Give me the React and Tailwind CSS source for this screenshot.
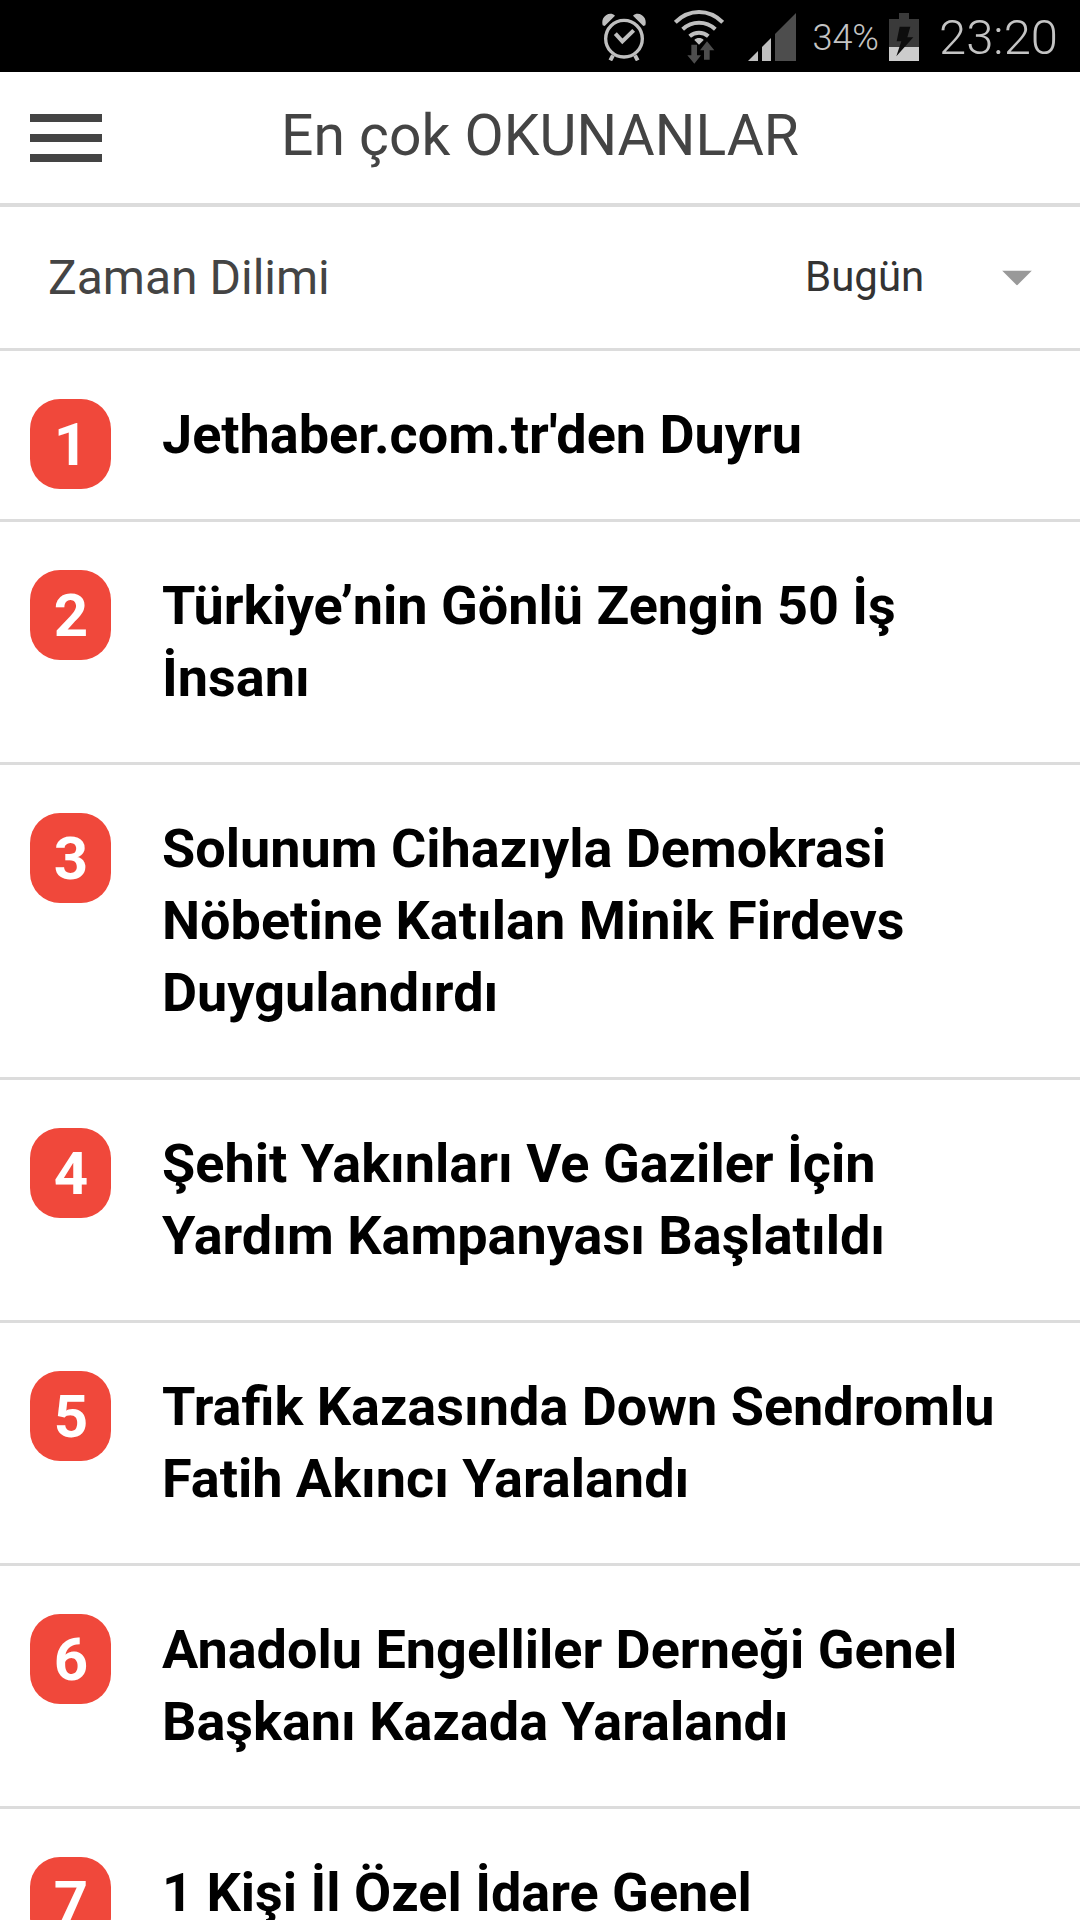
import { useState } from "react";

const news = [
  { id: 1, title: "Jethaber.com.tr'den Duyru" },
  { id: 2, title: "Türkiye’nin Gönlü Zengin 50 İş İnsanı" },
  {
    id: 3,
    title: "Solunum Cihazıyla Demokrasi Nöbetine Katılan Minik Firdevs Duygulandırdı",
  },
  { id: 4, title: "Şehit Yakınları Ve Gaziler İçin Yardım Kampanyası Başlatıldı" },
  { id: 5, title: "Trafik Kazasında Down Sendromlu Fatih Akıncı Yaralandı" },
  { id: 6, title: "Anadolu Engelliler Derneği Genel Başkanı Kazada Yaralandı" },
  { id: 7, title: "1 Kişi İl Özel İdare Genel" },
];

function AlarmIcon() {
  return (
    <svg viewBox="0 0 132 144" className="w-11 h-12" fill="none" stroke="#bfbfbf" aria-hidden="true">
      <circle cx="66" cy="77" r="55" strokeWidth="10" />
      <path d="M40 62l21 23 34-33" strokeWidth="12" />
      <path d="M33 127l-8 15M99 127l8 15" strokeWidth="12" />
      <path
        d="M2 37C-1 24 2 14 12 7C21 1 31 1 39 8L8 39ZM130 37C133 24 130 14 120 7C111 1 101 1 93 8L124 39Z"
        fill="#bfbfbf"
        stroke="none"
      />
    </svg>
  );
}

function WifiIcon() {
  return (
    <svg viewBox="0 0 150 162" className="w-[50px] h-[54px]" fill="none" aria-hidden="true">
      <g stroke="#bfbfbf" strokeWidth="12">
        <path d="M4 37C45 -4 105 -4 146 37" />
        <path d="M26 58C54 32 96 32 124 58" />
        <path d="M47 79C63 65 87 65 103 79" />
      </g>
      <path d="M75 104L61 90C68 82 82 82 89 90Z" fill="#bfbfbf" />
      <path d="M52 104h17v32h12L61 161 40 136h12Z" fill="#4d4d4d" />
      <path d="M90 149h17v-28h14L99 94 78 121h12Z" fill="#4d4d4d" />
    </svg>
  );
}

function SignalIcon() {
  return (
    <svg viewBox="0 0 144 144" className="w-12 h-12" aria-hidden="true">
      <path d="M0 144L30 114V144Z" fill="#bfbfbf" />
      <path d="M42 144V102L69 75V144Z" fill="#bfbfbf" />
      <path d="M81 144V63L144 0V144Z" fill="#4d4d4d" />
    </svg>
  );
}

function BatteryIcon() {
  return (
    <svg viewBox="0 0 90 144" className="w-[30px] h-12" aria-hidden="true">
      <path d="M30 0H60V18H90V102H0V18H30Z" fill="#3a3a3a" />
      <path d="M0 102H90V144H0Z" fill="#cccccc" />
      <path d="M32 41H64L55 73H73L22 130L37 85H23Z" fill="#0d0d0d" />
    </svg>
  );
}

function StatusBar() {
  return (
    <div className="flex items-center justify-end h-18 shrink-0 bg-black pt-0.5 pr-[22px] text-[#c4c4c4] font-light">
      <AlarmIcon />
      <div className="ml-7 mr-6">
        <WifiIcon />
      </div>
      <SignalIcon />
      <span className="ml-4 pt-0.5 text-4xl leading-[48px]">34%</span>
      <div className="ml-2.5 mr-5">
        <BatteryIcon />
      </div>
      <span className="pt-0.5 text-[49px] leading-[60px]">23:20</span>
    </div>
  );
}

function App() {
  const [period, setPeriod] = useState("today");

  return (
    <div className="flex flex-col h-screen overflow-hidden bg-white font-[Roboto,sans-serif]">
      <StatusBar />

      <header className="grid grid-cols-[72px_1fr_72px] items-center shrink-0 px-[30px] pt-[30px] pb-[29px] border-b-4 border-[#dcdcdc]">
        <button type="button" aria-label="Menü" className="flex flex-col gap-3">
          <span className="w-full h-2 bg-[#444444]" />
          <span className="w-full h-2 bg-[#444444]" />
          <span className="w-full h-2 bg-[#444444]" />
        </button>
        <h1 className="pb-1 text-center text-[57px] leading-[68px] text-[#444444]">
          En çok OKUNANLAR
        </h1>
      </header>

      <div className="flex items-center justify-between shrink-0 px-12 py-9 border-b-3 border-[#dcdcdc]">
        <label htmlFor="period" className="text-5xl leading-[69px] text-[#444444]">
          Zaman Dilimi
        </label>
        <div className="relative">
          <select
            id="period"
            value={period}
            onChange={(event) => setPeriod(event.target.value)}
            className="block w-[227px] h-[69px] pb-0.5 appearance-none bg-transparent text-[42px] text-[#333333]"
          >
            <option value="today">Bugün</option>
          </select>
          <svg
            viewBox="0 0 30 15"
            className="absolute right-0 top-1/2 w-[30px] -translate-y-1/2 pointer-events-none"
            aria-hidden="true"
          >
            <path d="M0 0H30L15 15Z" fill="#999999" />
          </svg>
        </div>
      </div>

      <ol className="flex-1 overflow-y-auto [scrollbar-width:none]">
        {news.map((item) => (
          <li key={item.id} className="border-b-3 border-[#dcdcdc]">
            <a href="#" className="flex items-start px-[30px] py-12">
              <span className="w-[81px] h-[90px] -mb-8 pl-px shrink-0 rounded-[30px] bg-[#f0483b] text-center text-6xl leading-[92px] font-bold text-white">
                {item.id}
              </span>
              <span className="flex-1 ml-[51px] text-[54px] leading-[72px] font-bold text-black">
                {item.title}
              </span>
            </a>
          </li>
        ))}
      </ol>
    </div>
  );
}

export default App;
